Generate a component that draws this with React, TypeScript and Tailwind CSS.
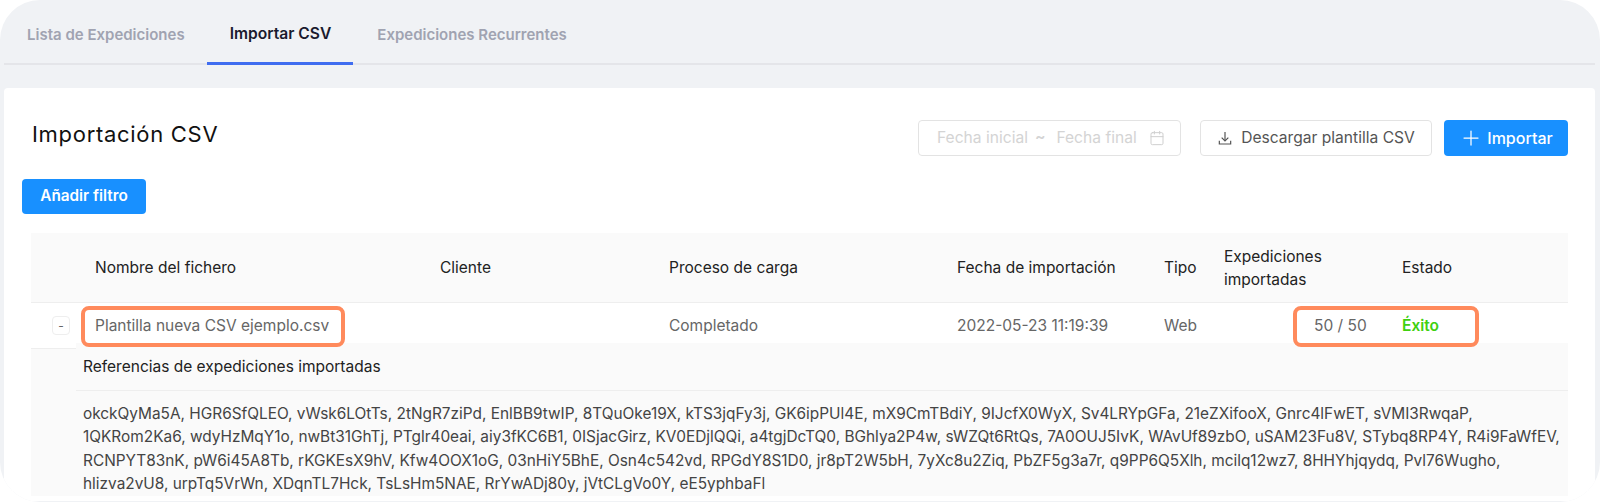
import React from 'react';
import { Calendar, Plus } from 'lucide-react';

// ========================================================================
// Data

const REFERENCE_LINES = [
  'okckQyMa5A, HGR6SfQLEO, vWsk6LOtTs, 2tNgR7ziPd, EnlBB9twIP, 8TQuOke19X, kTS3jqFy3j, GK6ipPUl4E, mX9CmTBdiY, 9IJcfX0WyX, Sv4LRYpGFa, 21eZXifooX, Gnrc4lFwET, sVMI3RwqaP,',
  '1QKRom2Ka6, wdyHzMqY1o, nwBt31GhTj, PTglr40eai, aiy3fKC6B1, 0ISjacGirz, KV0EDjlQQi, a4tgjDcTQ0, BGhlya2P4w, sWZQt6RtQs, 7A0OUJ5IvK, WAvUf89zbO, uSAM23Fu8V, STybq8RP4Y, R4i9FaWfEV,',
  'RCNPYT83nK, pW6i45A8Tb, rKGKEsX9hV, Kfw4OOX1oG, 03nHiY5BhE, Osn4c542vd, RPGdY8S1D0, jr8pT2W5bH, 7yXc8u2Ziq, PbZF5g3a7r, q9PP6Q5Xlh, mcilq12wz7, 8HHYhjqydq, Pvl76Wugho,',
  'hlizva2vU8, urpTq5VrWn, XDqnTL7Hck, TsLsHm5NAE, RrYwADj80y, jVtCLgVo0Y, eE5yphbaFl',
];

// ========================================================================
// App

const App: React.FC = () => {
  return (
    <div className="h-[502px] w-[1600px] overflow-hidden bg-white font-['Inter',sans-serif]">
      <div className="h-[502px] w-[1600px] overflow-hidden rounded-[40px] bg-[#f0f2f5] pl-1 pr-[5px]">
        {/* Tabs */}
        <div className="flex h-[65px] items-end border-b-2 border-[#e4e5e9] text-[15px] font-semibold text-[#a0a3b1]">
          <div className="flex h-[63px] items-center pt-[7px] pr-[22px] pl-[23px]">Lista de Expediciones</div>
          <div className="-mb-0.5 flex h-[65px] items-center border-b-[3px] border-[#3f6df0] pt-[6px] pr-[22px] pl-[23px] text-[15.6px] text-[#1a1a2e]">
            Importar CSV
          </div>
          <div className="flex h-[63px] items-center pt-[7px] pl-6">Expediciones Recurrentes</div>
        </div>

        {/* Card */}
        <div className="mt-[23px] h-[413px] overflow-hidden rounded-t-sm bg-white pt-8">
          <div className="flex h-9 items-center justify-between pr-[27px] pl-7">
            <h1 className="pb-2 text-[22px] font-normal tracking-[0.7px] text-[#111]">Importación CSV</h1>
            <div className="flex items-center text-[15.6px]">
              <div className="flex h-9 w-[263px] items-center rounded border border-[#e3e3e3] pl-[18px] text-[#d4d4d4]">
                <span>Fecha inicial</span>
                <span className="mx-[9px] -translate-x-0.5 -translate-y-px font-semibold">~</span>
                <span>Fecha final</span>
                <Calendar className="ml-3 h-4 w-4 text-[#cfcfcf]" strokeWidth={1.5} />
              </div>
              <button className="ml-[19px] flex h-9 w-[232px] items-center justify-center gap-2 rounded border border-[#e3e3e3] text-[#555]">
                <svg className="h-4 w-4" viewBox="0 0 24 24" fill="none" stroke="currentColor" strokeWidth={1.8}>
                  <path d="M12 3v13" />
                  <path d="M7 11.5l5 5 5-5" />
                  <path d="M3.5 16v5h17v-5" />
                </svg>
                Descargar plantilla CSV
              </button>
              <button className="ml-3 flex h-9 w-[124px] items-center justify-center gap-1 rounded bg-[#1890ff] text-base font-medium text-white">
                <Plus className="h-6 w-6" strokeWidth={1.25} />
                Importar
              </button>
            </div>
          </div>

          <button className="mt-[23px] ml-[18px] flex h-[35px] w-[124px] items-center justify-center rounded bg-[#1890ff] text-[15.3px] font-semibold text-white">
            Añadir filtro
          </button>

          {/* Table */}
          <div className="relative mt-[19px] mr-[27px] ml-[27px] text-[15.5px]">
            <div className="grid h-[70px] grid-cols-[64px_345px_229px_288px_207px_60px_178px_1fr] items-center border-b border-[#eeeeee] bg-[#fafafa] text-[#222]">
              <div />
              <div>Nombre del fichero</div>
              <div>Cliente</div>
              <div>Proceso de carga</div>
              <div>Fecha de importación</div>
              <div>Tipo</div>
              <div className="leading-[23px]">
                Expediciones
                <br />
                importadas
              </div>
              <div>Estado</div>
            </div>

            <div className="grid h-10 grid-cols-[64px_345px_229px_288px_207px_60px_178px_1fr] items-center pt-[5px] text-[#666]">
              <div className="pl-[21px]">
                <div className="flex h-[19px] w-[18px] items-center justify-center rounded-sm border border-[#eeeeee] text-xs">-</div>
              </div>
              <div>Plantilla nueva CSV ejemplo.csv</div>
              <div />
              <div>Completado</div>
              <div>2022-05-23 11:19:39</div>
              <div>Web</div>
              <div className="pl-[90px]">50 / 50</div>
              <div className="font-semibold text-[#3fd010]">Éxito</div>
            </div>

            {/* Orange highlight boxes */}
            <div className="absolute top-[73px] left-[50px] h-[41px] w-[264px] rounded-lg border-4 border-[#ff8a5c]" />
            <div className="absolute top-[73px] left-[1262px] h-[41px] w-[186px] rounded-lg border-4 border-[#ff8a5c]" />

            <div className="flex bg-[#fafafa]">
              <div className="h-[6px] w-[45px] shrink-0 border-b border-[#eeeeee] bg-white" />
              <div className="min-w-0 flex-1">
                <div className="flex h-[48px] items-center border-b border-[#eeeeee] pl-[7px] text-[#222]">Referencias de expediciones importadas</div>
                <div className="pt-[11px] pl-[7px] text-[15.4px] leading-[23.4px] whitespace-nowrap text-[#444]">
                  {REFERENCE_LINES.map((line) => (
                    <div key={line}>{line}</div>
                  ))}
                </div>
              </div>
            </div>
          </div>
        </div>
      </div>
    </div>
  );
};

export default App;
